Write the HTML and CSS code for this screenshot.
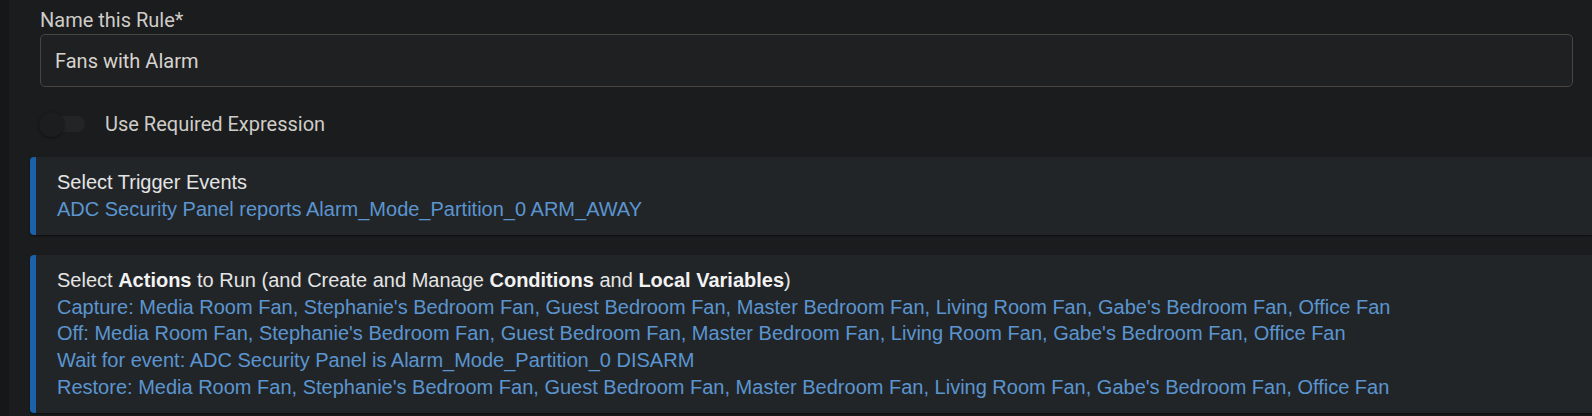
FILE: index.html
```html
<!DOCTYPE html>
<html lang="en">
<head>
    <meta charset="UTF-8">
    <title>Fans with Alarm</title>
    <link rel="stylesheet" href="styles.css">
</head>
<body>

<div class="page">
    <div class="rail"></div>
    <main class="content">
        <div class="rule-form">
            <label class="field-label" for="ruleName">Name this Rule*</label>
            <input type="text" class="name-input" id="ruleName" value="Fans with Alarm">
            <div class="toggle-row">
                <span class="switch"><span class="switch-knob"></span></span>
                <span class="toggle-label">Use Required Expression</span>
            </div>
        </div>

        <section class="panel panel-trigger">
            <div class="panel-title">Select Trigger Events</div>
            <div class="panel-link">ADC Security Panel reports Alarm_Mode_Partition_0 ARM_AWAY</div>
        </section>

        <section class="panel panel-actions">
            <div class="panel-title">Select <b>Actions</b> to Run (and Create and Manage <b>Conditions</b> and <b>Local Variables</b>)</div>
            <div class="panel-link">Capture: Media Room Fan, Stephanie's Bedroom Fan, Guest Bedroom Fan, Master Bedroom Fan, Living Room Fan, Gabe's Bedroom Fan, Office Fan</div>
            <div class="panel-link">Off: Media Room Fan, Stephanie's Bedroom Fan, Guest Bedroom Fan, Master Bedroom Fan, Living Room Fan, Gabe's Bedroom Fan, Office Fan</div>
            <div class="panel-link">Wait for event: ADC Security Panel is Alarm_Mode_Partition_0 DISARM</div>
            <div class="panel-link">Restore: Media Room Fan, Stephanie's Bedroom Fan, Guest Bedroom Fan, Master Bedroom Fan, Living Room Fan, Gabe's Bedroom Fan, Office Fan</div>
        </section>
    </main>
</div>

</body>
</html>
```

FILE: styles.css
```css
html, body {
    margin: 0;
    background: #1b1c1e;
    overflow: hidden;
}
.page {
    display: flex;
    min-height: 416px;
}
.rail {
    width: 9px;
    flex: none;
    background: #161719;
}
.content {
    flex: 1;
    min-width: 0;
}
.rule-form {
    padding: 9px 19px 0 31px;
    font-family: Roboto, "Liberation Sans", sans-serif;
    font-size: 20px;
    color: #cfccc7;
}
.field-label {
    display: block;
    line-height: 23px;
}
.name-input {
    display: block;
    box-sizing: border-box;
    width: 100%;
    height: 53px;
    margin-top: 2px;
    padding: 0 14px;
    font-family: Roboto, "Liberation Sans", sans-serif;
    font-size: 20px;
    color: #d6d3ce;
    background: #1f2022;
    border: 1px solid #4a453f;
    border-radius: 5px;
    outline: none;
}
.toggle-row {
    display: flex;
    align-items: center;
    gap: 20px;
    margin-top: 24px;
    height: 26px;
}
.switch {
    position: relative;
    width: 45px;
    height: 16px;
    border-radius: 8px;
    background: #232426;
}
.switch-knob {
    position: absolute;
    left: -1px;
    top: -4px;
    width: 25px;
    height: 25px;
    border-radius: 50%;
    background: #1c1d1f;
    box-shadow: 0 1px 3px rgba(0, 0, 0, 0.45);
}
.toggle-label {
    line-height: 23px;
}
.panel {
    margin-left: 21px;
    background: #222528;
    border-left: 6px solid #1b62aa;
    border-radius: 4px 0 0 4px;
    box-shadow: 0 1px 2px rgba(0, 0, 0, 0.55);
    padding: 12px 21px 13px;
    font-family: "Liberation Sans", Arial, sans-serif;
    font-size: 20px;
    line-height: 26.6px;
    white-space: nowrap;
}
.panel-trigger {
    margin-top: 20px;
}
.panel-actions {
    margin-top: 20px;
}
.panel-title {
    color: #e4e4e4;
}
.panel-title b {
    color: #f2f2f2;
}
.panel-link {
    color: #5b95d0;
}
```
